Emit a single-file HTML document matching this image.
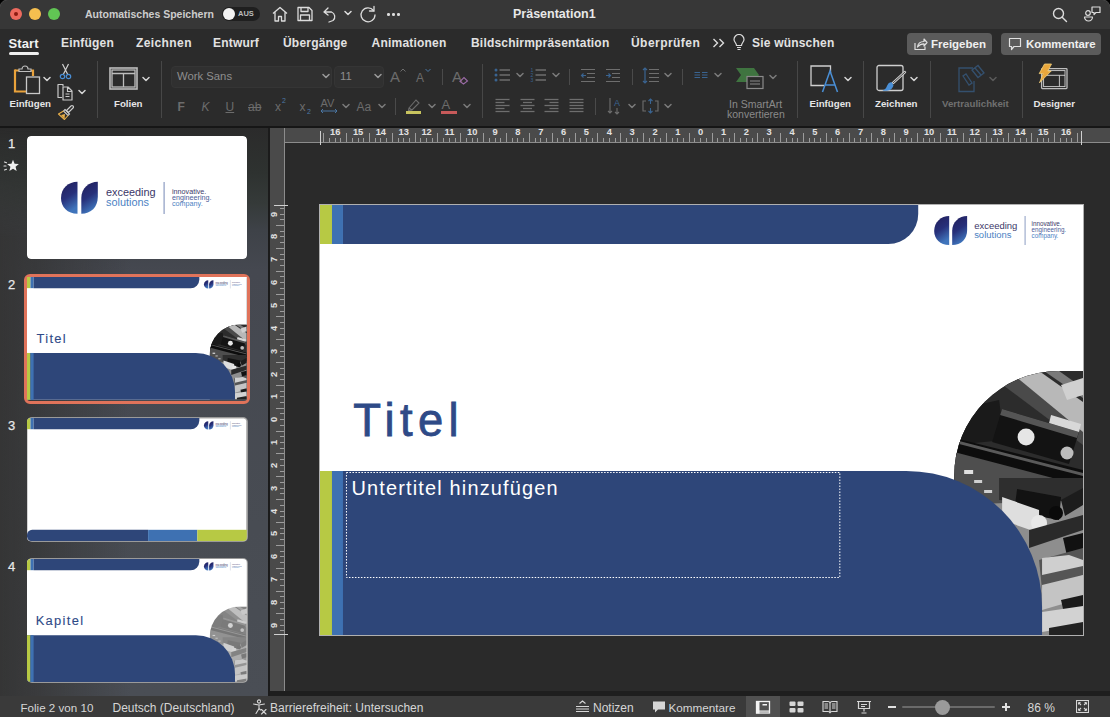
<!DOCTYPE html>
<html><head><meta charset="utf-8">
<style>
*{margin:0;padding:0;box-sizing:border-box}
html,body{width:1110px;height:717px;overflow:hidden;background:#2a2a2a;font-family:"Liberation Sans",sans-serif}
.a{position:absolute}
.t{position:absolute;white-space:nowrap;line-height:1}
#titlebar{left:0;top:0;width:1110px;height:29px;background:#373737;border-radius:8px 8px 0 0;box-shadow:0 0 0 0.5px #555}
#tabbar{left:0;top:29px;width:1110px;height:28px;background:#2b2b2b}
#ribbon{left:0;top:57px;width:1110px;height:69px;background:#2b2b2b}
.tab{font-weight:bold;font-size:12px;color:#e2e2e2;top:37px;letter-spacing:0.2px}
.lbl{font-weight:bold;font-size:9.7px;color:#e6e6e6;top:98.7px}
.sep{position:absolute;width:1.3px;background:#474747}
.chev{position:absolute;width:4.6px;height:4.6px;border-right:1.6px solid #d4d4d4;border-bottom:1.6px solid #d4d4d4;transform:translate(0.5px,0.5px) rotate(45deg)}
.chev.g{border-color:#7a7a7a}
.gray{color:#6c6c6c}
</style></head><body>
<div class="a" style="left:0;top:0;width:12px;height:12px;background:#000"></div><div class="a" style="left:1098px;top:0;width:12px;height:12px;background:#000"></div><div id="titlebar" class="a"></div>
<div id="tabbar" class="a"></div>
<div id="ribbon" class="a"></div>
<div class="a" style="left:0;top:126px;width:1110px;height:2px;background:#161616"></div>

<!-- traffic lights -->
<div class="a" style="left:10px;top:8px;width:12px;height:12px;border-radius:50%;background:#ed6a5e"></div>
<div class="a" style="left:14px;top:12px;width:4px;height:4px;border-radius:50%;background:#8c1a11"></div>
<div class="a" style="left:29px;top:8px;width:12px;height:12px;border-radius:50%;background:#f5bf4f"></div>
<div class="a" style="left:48px;top:8px;width:12px;height:12px;border-radius:50%;background:#61c554"></div>
<div class="t" style="left:85px;top:9px;font-size:10.5px;font-weight:bold;color:#cdcdcd">Automatisches Speichern</div>
<div class="a" style="left:222px;top:7px;width:38px;height:14px;border-radius:7px;background:#1f1f1f"></div>
<div class="a" style="left:223px;top:8px;width:12px;height:12px;border-radius:50%;background:#f2f2f2"></div>
<div class="t" style="left:238px;top:10px;font-size:7.5px;font-weight:bold;color:#bdbdbd">AUS</div>
<svg class="a" style="left:270px;top:5px" width="20" height="18" viewBox="0 0 20 18" fill="none" stroke="#dcdcdc" stroke-width="1.3" stroke-linejoin="round">
 <path d="M3 8.5 L10 2.5 L17 8.5 M5 7 V16 H8.5 V11.5 H11.5 V16 H15 V7"/></svg>
<svg class="a" style="left:296px;top:5px" width="18" height="18" viewBox="0 0 18 18" fill="none" stroke="#dcdcdc" stroke-width="1.3" stroke-linejoin="round">
 <path d="M2 2.5 H13 L16 5.5 V15.5 H2 Z M5 2.5 V6.5 H12 V2.5 M4.5 15.5 V10 H13.5 V15.5"/></svg>
<svg class="a" style="left:322px;top:5px" width="18" height="18" viewBox="0 0 18 18" fill="none" stroke="#dcdcdc" stroke-width="1.3" stroke-linecap="round" stroke-linejoin="round">
 <path d="M2 7 L6 3 M2 7 L6 10 M2 7 H9.5 A5 5 0 0 1 11 15.5 L7 17"/></svg>
<svg class="a" style="left:343.5px;top:9.5px" width="8" height="6" viewBox="0 0 8 6" fill="none" stroke="#dcdcdc" stroke-width="1.5" stroke-linecap="round" stroke-linejoin="round"><path d="M1 1.5 L4 4.5 L7 1.5"/></svg>
<svg class="a" style="left:358px;top:4px" width="20" height="20" viewBox="0 0 20 20" fill="none" stroke="#dcdcdc" stroke-width="1.3" stroke-linecap="round">
 <path d="M15.5 6.5 A7 7 0 1 0 17 11"/><path d="M16 2.5 V7 H11.5"/></svg>
<div class="a" style="left:387px;top:13px;width:2.5px;height:2.5px;border-radius:50%;background:#dcdcdc"></div>
<div class="a" style="left:392px;top:13px;width:2.5px;height:2.5px;border-radius:50%;background:#dcdcdc"></div>
<div class="a" style="left:397px;top:13px;width:2.5px;height:2.5px;border-radius:50%;background:#dcdcdc"></div>
<div class="t" style="left:513px;top:8px;font-size:12.5px;font-weight:bold;color:#e8e8e8">Präsentation1</div>
<svg class="a" style="left:1052px;top:7px" width="17" height="16" viewBox="0 0 17 16" fill="none" stroke="#dcdcdc" stroke-width="1.4" stroke-linecap="round">
 <circle cx="6.5" cy="6.5" r="5"/><path d="M10.2 10.2 L14.5 14.5"/></svg>
<svg class="a" style="left:1083px;top:5px" width="19" height="18" viewBox="0 0 19 18" fill="none" stroke="#dcdcdc" stroke-width="1.2" stroke-linejoin="round">
 <circle cx="5" cy="8" r="2.3"/><path d="M1.5 12 H9.5 A4 4 0 0 1 1.5 12 Z"/><path d="M9 2 H17 V7.5 H13 L11 9.5 V7.5 H9 Z"/></svg>

<div class="t tab" style="left:8.6px;top:36.5px;font-size:13px;color:#f2f2f2;letter-spacing:0.1px">Start</div>
<div class="a" style="left:9px;top:52px;width:30px;height:3px;border-radius:2px;background:#efefef"></div>
<div class="t tab" style="left:61px">Einfügen</div>
<div class="t tab" style="left:136px;letter-spacing:0.4px">Zeichnen</div>
<div class="t tab" style="left:213px">Entwurf</div>
<div class="t tab" style="left:283px">Übergänge</div>
<div class="t tab" style="left:371.6px">Animationen</div>
<div class="t tab" style="left:471px">Bildschirmpräsentation</div>
<div class="t tab" style="left:631px;letter-spacing:0.45px">Überprüfen</div>
<svg class="a" style="left:712px;top:37px" width="14" height="12" viewBox="0 0 14 12" fill="none" stroke="#dcdcdc" stroke-width="1.4"><path d="M1.5 2 L5.5 6 L1.5 10 M7.5 2 L11.5 6 L7.5 10"/></svg>
<svg class="a" style="left:732px;top:34px" width="14" height="17" viewBox="0 0 14 17" fill="none" stroke="#dcdcdc" stroke-width="1.2"><path d="M4.5 11.5 C4.5 9 2 8 2 5.5 A5 5 0 0 1 12 5.5 C12 8 9.5 9 9.5 11.5 Z M5 13.5 H9 M5.5 15.5 H8.5"/></svg>
<div class="t tab" style="left:752px">Sie wünschen</div>
<div class="a" style="left:907px;top:33px;width:85px;height:22px;border-radius:4px;background:#5b5b5b"></div>
<svg class="a" style="left:913px;top:37px" width="15" height="14" viewBox="0 0 15 14" fill="none" stroke="#e0e0e0" stroke-width="1.2" stroke-linejoin="round"><path d="M2 6 V12.5 H12 V9.5"/><path d="M4.5 10 C5 6 8 4.5 11 4.5 V2 L14 5.5 L11 9 V6.8 C8.5 6.8 6.5 7.5 4.5 10 Z"/></svg>
<div class="t" style="left:931px;top:38.5px;font-size:11.5px;font-weight:bold;color:#f0f0f0">Freigeben</div>
<div class="a" style="left:1001px;top:33px;width:100px;height:22px;border-radius:4px;background:#5b5b5b"></div>
<svg class="a" style="left:1008px;top:37px" width="14" height="14" viewBox="0 0 14 14" fill="none" stroke="#e0e0e0" stroke-width="1.2" stroke-linejoin="round"><path d="M1.5 1.5 H12.5 V9.5 H6 L3.5 12.5 V9.5 H1.5 Z"/></svg>
<div class="t" style="left:1026px;top:38.5px;font-size:11.4px;font-weight:bold;color:#f0f0f0">Kommentare</div>

<!-- ribbon group clipboard -->
<svg class="a" style="left:12px;top:64px" width="30" height="32" viewBox="0 0 30 32" fill="none">
 <path d="M3 6.5 H8 M18 6.5 H21 V12" stroke="#e9a23b" stroke-width="2.2"/>
 <path d="M3 5.5 V27.5 H14" stroke="#e9a23b" stroke-width="2.2"/>
 <path d="M7 7.5 V5 H10 A3 3 0 0 1 16 5 H19 V7.5 Z" stroke="#bdbdbd" stroke-width="1.2" fill="#2b2b2b"/>
 <rect x="14.5" y="13" width="13" height="16.5" stroke="#c8c8c8" stroke-width="1.3" fill="#2b2b2b"/>
</svg>
<svg class="a" style="left:43.0px;top:75.5px" width="8" height="6" viewBox="0 0 8 6" fill="none" stroke="#d4d4d4" stroke-width="1.5" stroke-linecap="round" stroke-linejoin="round"><path d="M1 1.5 L4 4.5 L7 1.5"/></svg>
<div class="t lbl" style="left:9.5px">Einfügen</div>
<svg class="a" style="left:59px;top:63px" width="13" height="17" viewBox="0 0 13 17" fill="none" stroke-width="1.2">
 <path d="M3.5 1 L8.5 11 M9.5 1 L4.5 11" stroke="#cfcfcf"/>
 <circle cx="3.5" cy="13.5" r="2.2" stroke="#4a8fd6"/><circle cx="9.5" cy="13.5" r="2.2" stroke="#4a8fd6"/>
</svg>
<svg class="a" style="left:56px;top:83px" width="19" height="18" viewBox="0 0 19 18" fill="none" stroke="#c8c8c8" stroke-width="1.2" stroke-linejoin="round">
 <path d="M7 3.5 V1.5 H2 V14.5 H6"/><path d="M7 4 H12 L16 8 V17 H7 Z M11.5 4.5 V8.5 H15.5 M9.5 11 H13.5 M9.5 13.5 H13.5"/>
</svg>
<svg class="a" style="left:77.5px;top:88.5px" width="8" height="6" viewBox="0 0 8 6" fill="none" stroke="#d4d4d4" stroke-width="1.5" stroke-linecap="round" stroke-linejoin="round"><path d="M1 1.5 L4 4.5 L7 1.5"/></svg>
<svg class="a" style="left:57px;top:104px" width="17" height="16" viewBox="0 0 17 16" fill="none">
 <path d="M9.5 6.5 L14 2 A1.4 1.4 0 0 1 16 4 L11.5 8.5 Z" stroke="#cfcfcf" stroke-width="1.1"/>
 <path d="M8 5.5 L12.5 10 L11 11.5 L6.5 7 Z" stroke="#cfcfcf" stroke-width="1.1"/>
 <path d="M6.5 7 L1.5 10 L7.5 15.5 L11 11.5" stroke="#eab04a" stroke-width="1.1" stroke-linejoin="round"/>
 <path d="M4 11 L8 10 L7.5 15 Z" fill="#eab04a"/>
</svg>
<div class="sep" style="left:96.5px;top:61px;height:57px"></div>
<svg class="a" style="left:109px;top:67px" width="29" height="23" viewBox="0 0 29 23" fill="none" stroke="#bdbdbd" stroke-width="1.3">
 <rect x="1" y="1" width="27" height="21" stroke-width="1.6"/><rect x="3" y="3" width="23" height="17"/>
 <path d="M3 6.5 H26 M14.5 6.5 V20"/>
</svg>
<svg class="a" style="left:141.5px;top:75.5px" width="8" height="6" viewBox="0 0 8 6" fill="none" stroke="#d4d4d4" stroke-width="1.5" stroke-linecap="round" stroke-linejoin="round"><path d="M1 1.5 L4 4.5 L7 1.5"/></svg>
<div class="t lbl" style="left:114px">Folien</div>
<div class="sep" style="left:161px;top:61px;height:57px"></div>

<!-- font group -->
<div class="a" style="left:171px;top:66px;width:161px;height:22px;border-radius:4px;background:#303030;border:1px solid #353535"></div>
<div class="t" style="left:177px;top:71px;font-size:11.3px;color:#8e8e8e">Work Sans</div>
<svg class="a" style="left:321.5px;top:72.5px" width="8" height="6" viewBox="0 0 8 6" fill="none" stroke="#9a9a9a" stroke-width="1.5" stroke-linecap="round" stroke-linejoin="round"><path d="M1 1.5 L4 4.5 L7 1.5"/></svg>
<div class="a" style="left:334px;top:66px;width:50px;height:22px;border-radius:4px;background:#303030;border:1px solid #353535"></div>
<div class="t" style="left:340px;top:71px;font-size:11.3px;color:#8e8e8e">11</div>
<svg class="a" style="left:373.5px;top:72.5px" width="8" height="6" viewBox="0 0 8 6" fill="none" stroke="#9a9a9a" stroke-width="1.5" stroke-linecap="round" stroke-linejoin="round"><path d="M1 1.5 L4 4.5 L7 1.5"/></svg>
<div class="t" style="left:390px;top:69px;font-size:15px;color:#6c6c6c">A</div>
<svg class="a" style="left:399px;top:67px" width="8" height="6" viewBox="0 0 8 6" fill="none" stroke="#6c6c6c" stroke-width="1"><path d="M1.5 4.5 L4 2 L6.5 4.5"/></svg>
<div class="t" style="left:416px;top:72px;font-size:12px;color:#6c6c6c">A</div>
<svg class="a" style="left:424px;top:67px" width="8" height="6" viewBox="0 0 8 6" fill="none" stroke="#4b77a4" stroke-width="1"><path d="M1.5 2 L4 4.5 L6.5 2"/></svg>
<div class="sep" style="left:441.5px;top:69px;height:16px;background:#4a4a4a"></div>
<div class="t" style="left:452px;top:69px;font-size:15px;color:#6c6c6c">A</div>
<svg class="a" style="left:459px;top:76px" width="10" height="9" viewBox="0 0 10 9" fill="none" stroke="#9a6aa6" stroke-width="1.1"><path d="M1 5.5 L5 1.5 L8.5 5 L4.5 8 Z"/></svg>
<!-- row 2 -->
<div class="t" style="left:177.5px;top:100.5px;font-size:12px;font-weight:bold;color:#6c6c6c">F</div>
<div class="t" style="left:201.5px;top:100.5px;font-size:12px;font-style:italic;color:#6c6c6c">K</div>
<div class="t" style="left:225.5px;top:100.5px;font-size:12px;color:#6c6c6c;text-decoration:underline">U</div>
<div class="t" style="left:248px;top:100.5px;font-size:12px;color:#6c6c6c;text-decoration:line-through">ab</div>
<div class="t" style="left:275px;top:101px;font-size:12px;color:#6c6c6c">x</div>
<div class="t" style="left:282px;top:97px;font-size:7px;color:#4b77a4">2</div>
<div class="t" style="left:299.5px;top:101px;font-size:12px;color:#6c6c6c">x</div>
<div class="t" style="left:307px;top:108px;font-size:7px;color:#4b77a4">2</div>
<div class="t" style="left:320.5px;top:98px;font-size:11px;color:#6c6c6c">AV</div>
<svg class="a" style="left:320px;top:108px" width="18" height="6" viewBox="0 0 18 6" fill="none" stroke="#4b77a4" stroke-width="1"><path d="M1 3 H17 M3 1 L1 3 L3 5 M15 1 L17 3 L15 5"/></svg>
<svg class="a" style="left:341.5px;top:102.5px" width="8" height="6" viewBox="0 0 8 6" fill="none" stroke="#7a7a7a" stroke-width="1.5" stroke-linecap="round" stroke-linejoin="round"><path d="M1 1.5 L4 4.5 L7 1.5"/></svg>
<div class="t" style="left:356.5px;top:101px;font-size:12px;color:#6c6c6c">Aa</div>
<svg class="a" style="left:377.5px;top:102.5px" width="8" height="6" viewBox="0 0 8 6" fill="none" stroke="#7a7a7a" stroke-width="1.5" stroke-linecap="round" stroke-linejoin="round"><path d="M1 1.5 L4 4.5 L7 1.5"/></svg>
<div class="sep" style="left:394.5px;top:98px;height:17px;background:#4a4a4a"></div>
<svg class="a" style="left:405px;top:97px" width="18" height="18" viewBox="0 0 18 18" fill="none">
 <path d="M4 11 L11 3 L14 6 L7 13 Z M4 11 L3.5 13.5 L7 13" stroke="#6c6c6c" stroke-width="1.1"/>
 <rect x="1" y="14" width="15" height="3" fill="#c7c35e"/></svg>
<svg class="a" style="left:427.5px;top:102.5px" width="8" height="6" viewBox="0 0 8 6" fill="none" stroke="#7a7a7a" stroke-width="1.5" stroke-linecap="round" stroke-linejoin="round"><path d="M1 1.5 L4 4.5 L7 1.5"/></svg>
<div class="t" style="left:441.5px;top:98px;font-size:13px;color:#6c6c6c">A</div>
<div class="a" style="left:441px;top:111px;width:16px;height:3px;background:#c75a5a"></div>
<svg class="a" style="left:462.5px;top:102.5px" width="8" height="6" viewBox="0 0 8 6" fill="none" stroke="#7a7a7a" stroke-width="1.5" stroke-linecap="round" stroke-linejoin="round"><path d="M1 1.5 L4 4.5 L7 1.5"/></svg>
<div class="sep" style="left:482px;top:64px;height:54px"></div>
<!-- paragraph group --><svg class="a" style="left:494px;top:68px" width="17" height="14" viewBox="0 0 17 14"><circle cx="2" cy="2" r="1.5" fill="#3a6491"/><circle cx="2" cy="7" r="1.5" fill="#3a6491"/><circle cx="2" cy="12" r="1.5" fill="#3a6491"/><path d="M5.5 2 H16 M5.5 7 H16 M5.5 12 H16" stroke="#6e6e6e" stroke-width="1.3"/></svg><svg class="a" style="left:516.0px;top:71.5px" width="8" height="6" viewBox="0 0 8 6" fill="none" stroke="#7a7a7a" stroke-width="1.5" stroke-linecap="round" stroke-linejoin="round"><path d="M1 1.5 L4 4.5 L7 1.5"/></svg><svg class="a" style="left:530px;top:67px" width="17" height="16" viewBox="0 0 17 16"><text x="0.5" y="5" font-size="5" fill="#3a6491" font-family="Liberation Sans">1</text><text x="0.5" y="10" font-size="5" fill="#3a6491" font-family="Liberation Sans">2</text><text x="0.5" y="15" font-size="5" fill="#3a6491" font-family="Liberation Sans">3</text><path d="M5.5 3 H16 M5.5 8 H16 M5.5 13 H16" stroke="#6e6e6e" stroke-width="1.3"/></svg><svg class="a" style="left:551.5px;top:71.5px" width="8" height="6" viewBox="0 0 8 6" fill="none" stroke="#7a7a7a" stroke-width="1.5" stroke-linecap="round" stroke-linejoin="round"><path d="M1 1.5 L4 4.5 L7 1.5"/></svg><div class="sep" style="left:569px;top:69px;height:16px;background:#4a4a4a"></div><svg class="a" style="left:580px;top:68px" width="16" height="15" viewBox="0 0 16 15" fill="none" stroke-width="1.2"><path d="M1 1.5 H15 M7 5.5 H15 M7 9.5 H15 M1 13.5 H15" stroke="#6e6e6e"/><path d="M6 7.5 H1.5 M3.5 5.5 L1.5 7.5 L3.5 9.5" stroke="#3a6491"/></svg><svg class="a" style="left:605px;top:68px" width="16" height="15" viewBox="0 0 16 15" fill="none" stroke-width="1.2"><path d="M1 1.5 H15 M7 5.5 H15 M7 9.5 H15 M1 13.5 H15" stroke="#6e6e6e"/><path d="M1 7.5 H5.5 M3.5 5.5 L5.5 7.5 L3.5 9.5" stroke="#3a6491"/></svg><div class="sep" style="left:631.5px;top:69px;height:16px;background:#4a4a4a"></div><svg class="a" style="left:642px;top:67px" width="18" height="17" viewBox="0 0 18 17" fill="none" stroke-width="1.2"><path d="M7 2.5 H17 M7 6.5 H17 M7 10.5 H17 M7 14.5 H17" stroke="#6e6e6e"/><path d="M3 1 V16 M1 3 L3 1 L5 3 M1 14 L3 16 L5 14" stroke="#3a6491"/></svg><svg class="a" style="left:664.0px;top:71.5px" width="8" height="6" viewBox="0 0 8 6" fill="none" stroke="#7a7a7a" stroke-width="1.5" stroke-linecap="round" stroke-linejoin="round"><path d="M1 1.5 L4 4.5 L7 1.5"/></svg><div class="sep" style="left:681.5px;top:69px;height:16px;background:#4a4a4a"></div><svg class="a" style="left:694px;top:71px" width="14" height="8" viewBox="0 0 14 8" fill="none" stroke="#3a6491" stroke-width="1.2"><path d="M0.5 1.5 H6 M0.5 4 H6 M0.5 6.5 H6 M8 1.5 H13.5 M8 4 H13.5 M8 6.5 H13.5"/></svg><svg class="a" style="left:714.0px;top:71.5px" width="8" height="6" viewBox="0 0 8 6" fill="none" stroke="#7a7a7a" stroke-width="1.5" stroke-linecap="round" stroke-linejoin="round"><path d="M1 1.5 L4 4.5 L7 1.5"/></svg><svg class="a" style="left:735px;top:67px" width="30" height="23" viewBox="0 0 30 23"><path d="M1 1 H19 L24 8 L19 15 H1 L6 8 Z" fill="#3f7440"/><rect x="12" y="9.5" width="16" height="12" fill="#2b2b2b" stroke="#8a8a8a" stroke-width="1.2"/><path d="M15 14 H25 M15 17 H25" stroke="#8a8a8a" stroke-width="1"/></svg><svg class="a" style="left:768.5px;top:73.5px" width="8" height="6" viewBox="0 0 8 6" fill="none" stroke="#7a7a7a" stroke-width="1.5" stroke-linecap="round" stroke-linejoin="round"><path d="M1 1.5 L4 4.5 L7 1.5"/></svg><div class="t" style="left:729px;top:98.5px;font-size:10.5px;color:#8a8a8a">In SmartArt</div><div class="t" style="left:727px;top:109px;font-size:10.5px;color:#8a8a8a">konvertieren</div><svg class="a" style="left:495px;top:98px" width="15" height="15" viewBox="0 0 15 15" fill="none" stroke="#6e6e6e" stroke-width="1.3"><path d="M0.5 1.5 H14.5"/><path d="M0.5 4.5 H9.5"/><path d="M0.5 7.5 H14.5"/><path d="M0.5 10.5 H9.5"/><path d="M0.5 13.5 H14.5"/></svg><svg class="a" style="left:520px;top:98px" width="15" height="15" viewBox="0 0 15 15" fill="none" stroke="#6e6e6e" stroke-width="1.3"><path d="M0.5 1.5 H14.5"/><path d="M3.0 4.5 H12.0"/><path d="M0.5 7.5 H14.5"/><path d="M3.0 10.5 H12.0"/><path d="M0.5 13.5 H14.5"/></svg><svg class="a" style="left:544px;top:98px" width="15" height="15" viewBox="0 0 15 15" fill="none" stroke="#6e6e6e" stroke-width="1.3"><path d="M0.5 1.5 H14.5"/><path d="M5.5 4.5 H14.5"/><path d="M0.5 7.5 H14.5"/><path d="M5.5 10.5 H14.5"/><path d="M0.5 13.5 H14.5"/></svg><svg class="a" style="left:569px;top:98px" width="15" height="15" viewBox="0 0 15 15" fill="none" stroke="#6e6e6e" stroke-width="1.3"><path d="M0.5 1.5 H14.5"/><path d="M0.5 4.5 H14.5"/><path d="M0.5 7.5 H14.5"/><path d="M0.5 10.5 H14.5"/><path d="M0.5 13.5 H14.5"/></svg><div class="sep" style="left:595px;top:98px;height:17px;background:#4a4a4a"></div><svg class="a" style="left:607px;top:97px" width="16" height="18" viewBox="0 0 16 18" fill="none" stroke-width="1.1"><path d="M3 1 V16 M1 14 L3 16 L5 14" stroke="#6e6e6e"/><path d="M10 11 V17 M8 15 L10 17 L12 15" stroke="#6e6e6e"/><text x="7" y="9" font-size="9" fill="#3a6491" stroke="none" font-family="Liberation Sans">A</text></svg><svg class="a" style="left:628.0px;top:102.5px" width="8" height="6" viewBox="0 0 8 6" fill="none" stroke="#7a7a7a" stroke-width="1.5" stroke-linecap="round" stroke-linejoin="round"><path d="M1 1.5 L4 4.5 L7 1.5"/></svg><svg class="a" style="left:642px;top:98px" width="17" height="16" viewBox="0 0 17 16" fill="none" stroke-width="1.1"><path d="M4 3 H1 V13 H4 M13 3 H16 V13 H13" stroke="#6e6e6e"/><path d="M8.5 1 V6 M6.5 3 L8.5 1 L10.5 3 M8.5 15 V10 M6.5 13 L8.5 15 L10.5 13" stroke="#3a6491"/></svg><svg class="a" style="left:663.5px;top:102.5px" width="8" height="6" viewBox="0 0 8 6" fill="none" stroke="#7a7a7a" stroke-width="1.5" stroke-linecap="round" stroke-linejoin="round"><path d="M1 1.5 L4 4.5 L7 1.5"/></svg><div class="sep" style="left:797px;top:61px;height:57px"></div>

<!-- insert / draw / sensitivity / designer -->
<svg class="a" style="left:809px;top:64px" width="30" height="29" viewBox="0 0 30 29" fill="none">
 <path d="M15 21.5 H2 V2 H21.5 V9" stroke="#cfcfcf" stroke-width="1.3"/>
 <path d="M13.5 28 L21 7 L28.5 28 M16 21 H26" stroke="#4a8fd6" stroke-width="1.5"/>
</svg>
<svg class="a" style="left:843.5px;top:76px" width="8" height="6" viewBox="0 0 8 6" fill="none" stroke="#d4d4d4" stroke-width="1.5" stroke-linecap="round" stroke-linejoin="round"><path d="M1 1.5 L4 4.5 L7 1.5"/></svg>
<div class="t lbl" style="left:809.5px">Einfügen</div>
<div class="sep" style="left:863px;top:61px;height:57px"></div>
<svg class="a" style="left:876px;top:64px" width="31" height="29" viewBox="0 0 31 29" fill="none">
 <rect x="1" y="1.5" width="26" height="25" rx="2" stroke="#cfcfcf" stroke-width="1.3"/>
 <path d="M29 8 L17 19" stroke="#cfcfcf" stroke-width="2.4" stroke-linecap="round"/>
 <path d="M29 8 L17 19" stroke="#292929" stroke-width="0.8" stroke-linecap="round"/>
 <path d="M16 18.5 C12 17.5 11.5 22 10 24 C9 25.5 7 26 6.5 26.5 C11 27.5 16 26.5 17.5 21.5 Z" fill="#4a8fd6"/>
</svg>
<svg class="a" style="left:909.5px;top:76px" width="8" height="6" viewBox="0 0 8 6" fill="none" stroke="#d4d4d4" stroke-width="1.5" stroke-linecap="round" stroke-linejoin="round"><path d="M1 1.5 L4 4.5 L7 1.5"/></svg>
<div class="t lbl" style="left:875px">Zeichnen</div>
<div class="sep" style="left:930px;top:61px;height:57px"></div>
<svg class="a" style="left:957px;top:63px" width="29" height="30" viewBox="0 0 29 30" fill="none" stroke="#34506e" stroke-width="1.3">
 <path d="M16 5 H2 V28.5 H17 V18"/>
 <path d="M6 13 L12 22 L15 20 L9 11 Z"/>
 <path d="M15 7 L21 2.5 L27 10 L21 14.5 Z M18 5 L24 12"/>
</svg>
<svg class="a" style="left:989.0px;top:76px" width="8" height="6" viewBox="0 0 8 6" fill="none" stroke="#5a5a5a" stroke-width="1.5" stroke-linecap="round" stroke-linejoin="round"><path d="M1 1.5 L4 4.5 L7 1.5"/></svg>
<div class="t lbl" style="left:942px;color:#707070">Vertraulichkeit</div>
<div class="sep" style="left:1022px;top:61px;height:57px"></div>
<svg class="a" style="left:1037px;top:63px" width="32" height="29" viewBox="0 0 32 29" fill="none">
 <rect x="4.6" y="5.6" width="25.4" height="20" rx="0.8" stroke="#bdbdbd" stroke-width="1.3"/>
 <rect x="6.6" y="7.6" width="21.4" height="16" stroke="#cfcfcf" stroke-width="0.9"/>
 <path d="M6.6 12.3 H28 M22.4 12.3 V23.6" stroke="#d4d4d4" stroke-width="0.9"/>
 <path d="M7.5 1 H14.5 L10.8 8 H14.2 L2.5 19.8 L6.2 10.6 H2.2 Z" fill="#e9a73c" stroke="#f3cf7a" stroke-width="0.8" stroke-linejoin="round"/>
</svg>
<div class="t lbl" style="left:1033.5px">Designer</div>

<!-- MAIN -->
<div class="a" style="left:0;top:128px;width:268px;height:568px;background:linear-gradient(180deg,#2b2b2b 0px,#2e3230 45px,#353a39 75px,#3e4248 102px,#454850 142px,#484c53 400px,#4a4e55 568px)"></div>
<div class="a" style="left:0;top:128px;width:130px;height:568px;background:linear-gradient(90deg,rgba(52,52,52,0.95) 0px,rgba(52,52,52,0.7) 40px,rgba(52,52,52,0) 130px);-webkit-mask-image:linear-gradient(180deg,transparent 0px,black 110px);mask-image:linear-gradient(180deg,transparent 0px,black 110px)"></div>
<div class="a" style="left:268px;top:128px;width:2px;height:568px;background:#1b1b1b"></div>
<div class="t" style="left:8px;top:136.8px;font-size:13px;color:#e8e8e8;-webkit-text-stroke:0.25px #e8e8e8">1</div><div class="t" style="left:8px;top:278.2px;font-size:13px;color:#e8e8e8;-webkit-text-stroke:0.25px #e8e8e8">2</div><div class="t" style="left:8px;top:419.2px;font-size:13px;color:#e8e8e8;-webkit-text-stroke:0.25px #e8e8e8">3</div><div class="t" style="left:8px;top:560.2px;font-size:13px;color:#e8e8e8;-webkit-text-stroke:0.25px #e8e8e8">4</div><svg class="a" style="left:0;top:155px" width="24" height="22" viewBox="0 155 24 22"><path d="M13.00 159.80 L14.59 163.82 L18.90 164.08 L15.57 166.83 L16.64 171.02 L13.00 168.70 L9.36 171.02 L10.43 166.83 L7.10 164.08 L11.41 163.82 Z" fill="#f0f0f0"/><path d="M4.5 162 L6.5 162.8 M4 166 H6 M4.5 170 L6.5 169.2" stroke="#e0e0e0" stroke-width="1.1" stroke-linecap="round"/></svg><svg class="a" style="left:27px;top:136px;border-radius:4px" width="220" height="123" viewBox="0 0 220 123">
<defs><linearGradient id="lg1" x1="0" y1="0" x2="0.35" y2="1"><stop offset="0" stop-color="#211d58"/><stop offset="0.55" stop-color="#27307a"/><stop offset="1" stop-color="#3f74bb"/></linearGradient></defs>
<rect width="220" height="123" rx="4" fill="#fff"/>
<path d="M50.5 45.7 V77.8 C40.5 77.8 34 71 34 62 C34 52 41.5 45.7 50.5 45.7 Z" fill="url(#lg1)"/>
<path d="M54.3 77.8 V62 C54.3 52 62 45.7 70.8 45.7 V61 C70.8 71 64 77.8 54.3 77.8 Z" fill="url(#lg1)"/>
<text x="79" y="59.6" font-size="10.9" fill="#3b3768" font-family="Liberation Sans">exceeding</text>
<text x="79" y="69.8" font-size="10.9" fill="#4c82c3" font-family="Liberation Sans">solutions</text>
<rect x="136.5" y="46" width="1.2" height="32" fill="#8c9cc2"/>
<text x="145" y="58" font-size="7.2" fill="#3b3768" font-family="Liberation Sans">innovative.</text>
<text x="145" y="64.3" font-size="7.2" fill="#4c5c98" font-family="Liberation Sans">engineering.</text>
<text x="145" y="70.3" font-size="7.2" fill="#4c82c3" font-family="Liberation Sans">company.</text>
</svg><div class="a" style="left:24px;top:273.6px;width:226.4px;height:130.2px;border:3.2px solid #e0735a;border-radius:6px"></div><svg class="a" style="left:27.4px;top:277.4px" width="219.8" height="122.8" viewBox="0 0 764 430" preserveAspectRatio="none"><rect x="0" y="0" width="764" height="430" fill="#fff"/><defs><clipPath id="pht2"><path d="M635 430 V271 A105 105 0 0 1 740 166 H764 V430 Z"/></clipPath></defs>
<g clip-path="url(#pht2)"><rect x="630" y="160" width="140" height="275" fill="#2c2c2c"/>
<g transform="translate(-320 -205)">
<rect x="950" y="365" width="140" height="275" fill="#2c2c2c"/>
<path d="M985 371 L1012 371 L1084 425 L1084 445 Z" fill="#4a4a4a"/>
<path d="M1010 371 L1040 371 L1084 402 L1084 432 Z" fill="#b8b8b8"/>
<path d="M1045 371 L1060 371 L1084 388 L1084 398 Z" fill="#7a7a7a"/>
<path d="M1062 385 L1084 378 L1084 395 L1068 400 Z" fill="#d0d0d0"/>
<path d="M955 410 L1000 400 L1005 440 L955 445 Z" fill="#1a1a1a"/>
<path d="M1003 409 L1080 432 L1070 464 L993 442 Z" fill="#131313"/>
<path d="M1003 409 L1080 432 L1078 438 L1001 415 Z" fill="#555"/>
<path d="M1052 415 L1082 424 L1080 432 L1050 423 Z" fill="#d8d8d8"/>
<circle cx="1027" cy="437" r="8.5" fill="#e6e6e6"/>
<circle cx="1068" cy="453" r="6.5" fill="#bdbdbd"/>
<path d="M955 438 L1084 470 L1084 488 L955 458 Z" fill="#0d0d0d"/>
<path d="M960 441 L1084 473 L1084 476 L960 444 Z" fill="#5a5a5a"/>
<path d="M955 452 L1084 486 L1084 500 L955 510 Z" fill="#4e4e4e"/>
<path d="M1000 478 L1084 478 L1084 505 L1000 500 Z" fill="#2e2e2e"/>
<path d="M955 505 L1084 500 L1084 635 L955 635 Z" fill="#8e8e8e"/>
<path d="M1018 489 L1062 497 L1060 520 L1015 512 Z" fill="#121212"/>
<circle cx="1057" cy="513" r="7" fill="#0a0a0a"/>
<path d="M1062 500 L1084 488 L1084 505 L1066 516 Z" fill="#1c1c1c"/>
<path d="M1003 497 L1040 510 L1040 533 L1003 520 Z" fill="#dedede"/>
<circle cx="1040" cy="523" r="8" fill="#e8e8e8"/>
<rect x="965" y="470" width="9" height="4" fill="#e0e0e0"/><rect x="975" y="480" width="8" height="3" fill="#d0d0d0"/><rect x="985" y="490" width="8" height="3" fill="#d0d0d0"/>
<path d="M1030 530 L1084 515 L1084 530 L1030 548 Z" fill="#2a2a2a"/>
<path d="M1064 538 L1084 533 L1084 550 L1068 556 Z" fill="#111"/>
<path d="M1040 560 L1084 548 L1084 575 L1043 590 Z" fill="#555"/>
<path d="M1043 558 L1070 555 L1084 560 L1084 566 L1043 575 Z" fill="#cfcfcf"/>
<path d="M1043 585 L1084 575 L1084 598 L1043 610 Z" fill="#c4c4c4"/>
<path d="M1062 600 L1084 595 L1084 612 L1066 618 Z" fill="#1a1a1a"/>
<path d="M1043 612 L1084 606 L1084 625 L1043 632 Z" fill="#d2d2d2"/>
<path d="M1050 628 L1084 622 L1084 635 L1050 635 Z" fill="#222"/>
</g></g><rect x="0" y="0" width="12" height="39" fill="#b7c944"/><rect x="12" y="0" width="11" height="39" fill="#3e71b2"/><path d="M23 0 H599 V9 A30 30 0 0 1 569 39 H23 Z" fill="#2e4679"/><defs><linearGradient id="lgt2" x1="0" y1="0" x2="0.35" y2="1"><stop offset="0" stop-color="#211d58"/><stop offset="0.55" stop-color="#27307a"/><stop offset="1" stop-color="#3f74bb"/></linearGradient></defs>
<path d="M630 11 V40 C621 40 615 34 615 26 C615 17 622 11 630 11 Z" fill="url(#lgt2)"/>
<path d="M633 40 V26 C633 17 640 11 648 11 V25 C648 34 642 40 633 40 Z" fill="url(#lgt2)"/>
<text x="655" y="24" font-size="9.5" fill="#3b3768" font-family="Liberation Sans">exceeding</text>
<text x="655" y="33" font-size="9.5" fill="#4c82c3" font-family="Liberation Sans">solutions</text>
<rect x="705.5" y="11" width="1" height="29" fill="#8c9cc2"/>
<text x="712.5" y="21.2" font-size="6.3" fill="#3b3768" font-family="Liberation Sans">innovative.</text>
<text x="712.5" y="27.1" font-size="6.3" fill="#4c5c98" font-family="Liberation Sans">engineering.</text>
<text x="712.5" y="33" font-size="6.3" fill="#4c82c3" font-family="Liberation Sans">company.</text><path d="M0 266 H587 A136 136 0 0 1 723 402 V430 H0 Z" fill="#2e4679"/><rect x="0" y="266" width="12" height="164" fill="#b7c944"/><rect x="12" y="266" width="11" height="164" fill="#3e71b2"/><text x="33" y="230" font-size="45" fill="#2e4a87" stroke="#2e4a87" stroke-width="0.35" font-family="Liberation Sans" letter-spacing="4.6">Titel</text></svg><div class="a" style="left:26.6px;top:417px;width:221.4px;height:125.2px;border-radius:5px;background:#9a9a9a"></div><div class="a" style="left:26.6px;top:557.8px;width:221.4px;height:124.8px;border-radius:5px;background:#9a9a9a"></div><svg class="a" style="left:27.4px;top:417.8px;border-radius:4px" width="219.8" height="123.6" viewBox="0 0 764 430" preserveAspectRatio="none">
<rect width="764" height="430" rx="12" fill="#fff" stroke="#9a9a9a" stroke-width="3"/>
<rect x="0" y="0" width="12" height="39" fill="#b7c944"/><rect x="12" y="0" width="11" height="39" fill="#3e71b2"/>
<path d="M23 0 H599 V9 A30 30 0 0 1 569 39 H23 Z" fill="#2e4679"/>
<defs><linearGradient id="lg3" x1="0" y1="0" x2="0.35" y2="1"><stop offset="0" stop-color="#211d58"/><stop offset="0.55" stop-color="#27307a"/><stop offset="1" stop-color="#3f74bb"/></linearGradient></defs>
<path d="M630 11 V40 C621 40 615 34 615 26 C615 17 622 11 630 11 Z" fill="url(#lg3)"/>
<path d="M633 40 V26 C633 17 640 11 648 11 V25 C648 34 642 40 633 40 Z" fill="url(#lg3)"/>
<text x="655" y="24" font-size="9.5" fill="#3b3768" font-family="Liberation Sans">exceeding</text>
<text x="655" y="33" font-size="9.5" fill="#4c82c3" font-family="Liberation Sans">solutions</text>
<rect x="705.5" y="11" width="1" height="29" fill="#8c9cc2"/>
<text x="712.5" y="21.2" font-size="6.3" fill="#3b3768" font-family="Liberation Sans">innovative.</text>
<text x="712.5" y="27.1" font-size="6.3" fill="#4c5c98" font-family="Liberation Sans">engineering.</text>
<text x="712.5" y="33" font-size="6.3" fill="#4c82c3" font-family="Liberation Sans">company.</text>
<path d="M18 389 H421 V430 H18 A18 18 0 0 1 0 412 V407 A18 18 0 0 1 18 389 Z" fill="#2e4679"/>
<rect x="421" y="389" width="171" height="41" fill="#3e71b2"/>
<rect x="592" y="389" width="172" height="41" fill="#b7c944"/>
</svg><svg class="a" style="left:27.4px;top:558.6px;border-radius:4px" width="219.8" height="123.2" viewBox="0 0 764 430" preserveAspectRatio="none"><rect x="0" y="0" width="764" height="430" fill="#fff"/><defs><clipPath id="pht4"><path d="M635 430 V271 A105 105 0 0 1 740 166 H764 V430 Z"/></clipPath></defs>
<g clip-path="url(#pht4)"><rect x="630" y="160" width="140" height="275" fill="#c4c4c4"/>
<g transform="translate(-320 -205)" opacity="0.42">
<rect x="950" y="365" width="140" height="275" fill="#2c2c2c"/>
<path d="M985 371 L1012 371 L1084 425 L1084 445 Z" fill="#4a4a4a"/>
<path d="M1010 371 L1040 371 L1084 402 L1084 432 Z" fill="#b8b8b8"/>
<path d="M1045 371 L1060 371 L1084 388 L1084 398 Z" fill="#7a7a7a"/>
<path d="M1062 385 L1084 378 L1084 395 L1068 400 Z" fill="#d0d0d0"/>
<path d="M955 410 L1000 400 L1005 440 L955 445 Z" fill="#1a1a1a"/>
<path d="M1003 409 L1080 432 L1070 464 L993 442 Z" fill="#131313"/>
<path d="M1003 409 L1080 432 L1078 438 L1001 415 Z" fill="#555"/>
<path d="M1052 415 L1082 424 L1080 432 L1050 423 Z" fill="#d8d8d8"/>
<circle cx="1027" cy="437" r="8.5" fill="#e6e6e6"/>
<circle cx="1068" cy="453" r="6.5" fill="#bdbdbd"/>
<path d="M955 438 L1084 470 L1084 488 L955 458 Z" fill="#0d0d0d"/>
<path d="M960 441 L1084 473 L1084 476 L960 444 Z" fill="#5a5a5a"/>
<path d="M955 452 L1084 486 L1084 500 L955 510 Z" fill="#4e4e4e"/>
<path d="M1000 478 L1084 478 L1084 505 L1000 500 Z" fill="#2e2e2e"/>
<path d="M955 505 L1084 500 L1084 635 L955 635 Z" fill="#8e8e8e"/>
<path d="M1018 489 L1062 497 L1060 520 L1015 512 Z" fill="#121212"/>
<circle cx="1057" cy="513" r="7" fill="#0a0a0a"/>
<path d="M1062 500 L1084 488 L1084 505 L1066 516 Z" fill="#1c1c1c"/>
<path d="M1003 497 L1040 510 L1040 533 L1003 520 Z" fill="#dedede"/>
<circle cx="1040" cy="523" r="8" fill="#e8e8e8"/>
<rect x="965" y="470" width="9" height="4" fill="#e0e0e0"/><rect x="975" y="480" width="8" height="3" fill="#d0d0d0"/><rect x="985" y="490" width="8" height="3" fill="#d0d0d0"/>
<path d="M1030 530 L1084 515 L1084 530 L1030 548 Z" fill="#2a2a2a"/>
<path d="M1064 538 L1084 533 L1084 550 L1068 556 Z" fill="#111"/>
<path d="M1040 560 L1084 548 L1084 575 L1043 590 Z" fill="#555"/>
<path d="M1043 558 L1070 555 L1084 560 L1084 566 L1043 575 Z" fill="#cfcfcf"/>
<path d="M1043 585 L1084 575 L1084 598 L1043 610 Z" fill="#c4c4c4"/>
<path d="M1062 600 L1084 595 L1084 612 L1066 618 Z" fill="#1a1a1a"/>
<path d="M1043 612 L1084 606 L1084 625 L1043 632 Z" fill="#d2d2d2"/>
<path d="M1050 628 L1084 622 L1084 635 L1050 635 Z" fill="#222"/>
</g></g><rect x="0" y="0" width="12" height="39" fill="#b7c944"/><rect x="12" y="0" width="11" height="39" fill="#3e71b2"/><path d="M23 0 H599 V9 A30 30 0 0 1 569 39 H23 Z" fill="#2e4679"/><defs><linearGradient id="lgt4" x1="0" y1="0" x2="0.35" y2="1"><stop offset="0" stop-color="#211d58"/><stop offset="0.55" stop-color="#27307a"/><stop offset="1" stop-color="#3f74bb"/></linearGradient></defs>
<path d="M630 11 V40 C621 40 615 34 615 26 C615 17 622 11 630 11 Z" fill="url(#lgt4)"/>
<path d="M633 40 V26 C633 17 640 11 648 11 V25 C648 34 642 40 633 40 Z" fill="url(#lgt4)"/>
<text x="655" y="24" font-size="9.5" fill="#3b3768" font-family="Liberation Sans">exceeding</text>
<text x="655" y="33" font-size="9.5" fill="#4c82c3" font-family="Liberation Sans">solutions</text>
<rect x="705.5" y="11" width="1" height="29" fill="#8c9cc2"/>
<text x="712.5" y="21.2" font-size="6.3" fill="#3b3768" font-family="Liberation Sans">innovative.</text>
<text x="712.5" y="27.1" font-size="6.3" fill="#4c5c98" font-family="Liberation Sans">engineering.</text>
<text x="712.5" y="33" font-size="6.3" fill="#4c82c3" font-family="Liberation Sans">company.</text><path d="M0 266 H587 A136 136 0 0 1 723 402 V430 H0 Z" fill="#2e4679"/><rect x="0" y="266" width="12" height="164" fill="#b7c944"/><rect x="12" y="266" width="11" height="164" fill="#3e71b2"/><text x="30" y="230" font-size="45" fill="#2e4a87" stroke="#2e4a87" stroke-width="0.35" font-family="Liberation Sans" letter-spacing="4.6">Kapitel</text></svg><div class="a" style="left:270px;top:128px;width:840px;height:14px;background:#4a4a4a"></div><div class="a" style="left:270px;top:142px;width:840px;height:1px;background:#8c8c8c"></div><div class="a" style="left:270px;top:128px;width:14px;height:563px;background:#4a4a4a"></div><div class="a" style="left:284px;top:128px;width:1px;height:563px;background:#8c8c8c"></div><div class="t" style="left:325.21px;top:128px;width:20px;text-align:center;font-size:9.3px;font-weight:bold;color:#e2e2e2">16</div><div class="t" style="left:348.05px;top:128px;width:20px;text-align:center;font-size:9.3px;font-weight:bold;color:#e2e2e2">15</div><div class="t" style="left:370.89px;top:128px;width:20px;text-align:center;font-size:9.3px;font-weight:bold;color:#e2e2e2">14</div><div class="t" style="left:393.73px;top:128px;width:20px;text-align:center;font-size:9.3px;font-weight:bold;color:#e2e2e2">13</div><div class="t" style="left:416.57px;top:128px;width:20px;text-align:center;font-size:9.3px;font-weight:bold;color:#e2e2e2">12</div><div class="t" style="left:439.41px;top:128px;width:20px;text-align:center;font-size:9.3px;font-weight:bold;color:#e2e2e2">11</div><div class="t" style="left:462.25px;top:128px;width:20px;text-align:center;font-size:9.3px;font-weight:bold;color:#e2e2e2">10</div><div class="t" style="left:485.09px;top:128px;width:20px;text-align:center;font-size:9.3px;font-weight:bold;color:#e2e2e2">9</div><div class="t" style="left:507.93px;top:128px;width:20px;text-align:center;font-size:9.3px;font-weight:bold;color:#e2e2e2">8</div><div class="t" style="left:530.77px;top:128px;width:20px;text-align:center;font-size:9.3px;font-weight:bold;color:#e2e2e2">7</div><div class="t" style="left:553.61px;top:128px;width:20px;text-align:center;font-size:9.3px;font-weight:bold;color:#e2e2e2">6</div><div class="t" style="left:576.45px;top:128px;width:20px;text-align:center;font-size:9.3px;font-weight:bold;color:#e2e2e2">5</div><div class="t" style="left:599.29px;top:128px;width:20px;text-align:center;font-size:9.3px;font-weight:bold;color:#e2e2e2">4</div><div class="t" style="left:622.13px;top:128px;width:20px;text-align:center;font-size:9.3px;font-weight:bold;color:#e2e2e2">3</div><div class="t" style="left:644.97px;top:128px;width:20px;text-align:center;font-size:9.3px;font-weight:bold;color:#e2e2e2">2</div><div class="t" style="left:667.81px;top:128px;width:20px;text-align:center;font-size:9.3px;font-weight:bold;color:#e2e2e2">1</div><div class="t" style="left:690.65px;top:128px;width:20px;text-align:center;font-size:9.3px;font-weight:bold;color:#e2e2e2">0</div><div class="t" style="left:713.49px;top:128px;width:20px;text-align:center;font-size:9.3px;font-weight:bold;color:#e2e2e2">1</div><div class="t" style="left:736.33px;top:128px;width:20px;text-align:center;font-size:9.3px;font-weight:bold;color:#e2e2e2">2</div><div class="t" style="left:759.17px;top:128px;width:20px;text-align:center;font-size:9.3px;font-weight:bold;color:#e2e2e2">3</div><div class="t" style="left:782.01px;top:128px;width:20px;text-align:center;font-size:9.3px;font-weight:bold;color:#e2e2e2">4</div><div class="t" style="left:804.85px;top:128px;width:20px;text-align:center;font-size:9.3px;font-weight:bold;color:#e2e2e2">5</div><div class="t" style="left:827.69px;top:128px;width:20px;text-align:center;font-size:9.3px;font-weight:bold;color:#e2e2e2">6</div><div class="t" style="left:850.53px;top:128px;width:20px;text-align:center;font-size:9.3px;font-weight:bold;color:#e2e2e2">7</div><div class="t" style="left:873.37px;top:128px;width:20px;text-align:center;font-size:9.3px;font-weight:bold;color:#e2e2e2">8</div><div class="t" style="left:896.21px;top:128px;width:20px;text-align:center;font-size:9.3px;font-weight:bold;color:#e2e2e2">9</div><div class="t" style="left:919.05px;top:128px;width:20px;text-align:center;font-size:9.3px;font-weight:bold;color:#e2e2e2">10</div><div class="t" style="left:941.89px;top:128px;width:20px;text-align:center;font-size:9.3px;font-weight:bold;color:#e2e2e2">11</div><div class="t" style="left:964.73px;top:128px;width:20px;text-align:center;font-size:9.3px;font-weight:bold;color:#e2e2e2">12</div><div class="t" style="left:987.57px;top:128px;width:20px;text-align:center;font-size:9.3px;font-weight:bold;color:#e2e2e2">13</div><div class="t" style="left:1010.41px;top:128px;width:20px;text-align:center;font-size:9.3px;font-weight:bold;color:#e2e2e2">14</div><div class="t" style="left:1033.25px;top:128px;width:20px;text-align:center;font-size:9.3px;font-weight:bold;color:#e2e2e2">15</div><div class="t" style="left:1056.09px;top:128px;width:20px;text-align:center;font-size:9.3px;font-weight:bold;color:#e2e2e2">16</div><div class="a" style="left:323.29px;top:133.3px;width:1px;height:8.7px;background:#9c9c9c"></div><div class="a" style="left:329.00px;top:138px;width:1px;height:4px;background:#9c9c9c"></div><div class="a" style="left:334.71px;top:138px;width:1px;height:4px;background:#9c9c9c"></div><div class="a" style="left:340.42px;top:138px;width:1px;height:4px;background:#9c9c9c"></div><div class="a" style="left:346.13px;top:133.3px;width:1px;height:8.7px;background:#9c9c9c"></div><div class="a" style="left:351.84px;top:138px;width:1px;height:4px;background:#9c9c9c"></div><div class="a" style="left:357.55px;top:138px;width:1px;height:4px;background:#9c9c9c"></div><div class="a" style="left:363.26px;top:138px;width:1px;height:4px;background:#9c9c9c"></div><div class="a" style="left:368.97px;top:133.3px;width:1px;height:8.7px;background:#9c9c9c"></div><div class="a" style="left:374.68px;top:138px;width:1px;height:4px;background:#9c9c9c"></div><div class="a" style="left:380.39px;top:138px;width:1px;height:4px;background:#9c9c9c"></div><div class="a" style="left:386.10px;top:138px;width:1px;height:4px;background:#9c9c9c"></div><div class="a" style="left:391.81px;top:133.3px;width:1px;height:8.7px;background:#9c9c9c"></div><div class="a" style="left:397.52px;top:138px;width:1px;height:4px;background:#9c9c9c"></div><div class="a" style="left:403.23px;top:138px;width:1px;height:4px;background:#9c9c9c"></div><div class="a" style="left:408.94px;top:138px;width:1px;height:4px;background:#9c9c9c"></div><div class="a" style="left:414.65px;top:133.3px;width:1px;height:8.7px;background:#9c9c9c"></div><div class="a" style="left:420.36px;top:138px;width:1px;height:4px;background:#9c9c9c"></div><div class="a" style="left:426.07px;top:138px;width:1px;height:4px;background:#9c9c9c"></div><div class="a" style="left:431.78px;top:138px;width:1px;height:4px;background:#9c9c9c"></div><div class="a" style="left:437.49px;top:133.3px;width:1px;height:8.7px;background:#9c9c9c"></div><div class="a" style="left:443.20px;top:138px;width:1px;height:4px;background:#9c9c9c"></div><div class="a" style="left:448.91px;top:138px;width:1px;height:4px;background:#9c9c9c"></div><div class="a" style="left:454.62px;top:138px;width:1px;height:4px;background:#9c9c9c"></div><div class="a" style="left:460.33px;top:133.3px;width:1px;height:8.7px;background:#9c9c9c"></div><div class="a" style="left:466.04px;top:138px;width:1px;height:4px;background:#9c9c9c"></div><div class="a" style="left:471.75px;top:138px;width:1px;height:4px;background:#9c9c9c"></div><div class="a" style="left:477.46px;top:138px;width:1px;height:4px;background:#9c9c9c"></div><div class="a" style="left:483.17px;top:133.3px;width:1px;height:8.7px;background:#9c9c9c"></div><div class="a" style="left:488.88px;top:138px;width:1px;height:4px;background:#9c9c9c"></div><div class="a" style="left:494.59px;top:138px;width:1px;height:4px;background:#9c9c9c"></div><div class="a" style="left:500.30px;top:138px;width:1px;height:4px;background:#9c9c9c"></div><div class="a" style="left:506.01px;top:133.3px;width:1px;height:8.7px;background:#9c9c9c"></div><div class="a" style="left:511.72px;top:138px;width:1px;height:4px;background:#9c9c9c"></div><div class="a" style="left:517.43px;top:138px;width:1px;height:4px;background:#9c9c9c"></div><div class="a" style="left:523.14px;top:138px;width:1px;height:4px;background:#9c9c9c"></div><div class="a" style="left:528.85px;top:133.3px;width:1px;height:8.7px;background:#9c9c9c"></div><div class="a" style="left:534.56px;top:138px;width:1px;height:4px;background:#9c9c9c"></div><div class="a" style="left:540.27px;top:138px;width:1px;height:4px;background:#9c9c9c"></div><div class="a" style="left:545.98px;top:138px;width:1px;height:4px;background:#9c9c9c"></div><div class="a" style="left:551.69px;top:133.3px;width:1px;height:8.7px;background:#9c9c9c"></div><div class="a" style="left:557.40px;top:138px;width:1px;height:4px;background:#9c9c9c"></div><div class="a" style="left:563.11px;top:138px;width:1px;height:4px;background:#9c9c9c"></div><div class="a" style="left:568.82px;top:138px;width:1px;height:4px;background:#9c9c9c"></div><div class="a" style="left:574.53px;top:133.3px;width:1px;height:8.7px;background:#9c9c9c"></div><div class="a" style="left:580.24px;top:138px;width:1px;height:4px;background:#9c9c9c"></div><div class="a" style="left:585.95px;top:138px;width:1px;height:4px;background:#9c9c9c"></div><div class="a" style="left:591.66px;top:138px;width:1px;height:4px;background:#9c9c9c"></div><div class="a" style="left:597.37px;top:133.3px;width:1px;height:8.7px;background:#9c9c9c"></div><div class="a" style="left:603.08px;top:138px;width:1px;height:4px;background:#9c9c9c"></div><div class="a" style="left:608.79px;top:138px;width:1px;height:4px;background:#9c9c9c"></div><div class="a" style="left:614.50px;top:138px;width:1px;height:4px;background:#9c9c9c"></div><div class="a" style="left:620.21px;top:133.3px;width:1px;height:8.7px;background:#9c9c9c"></div><div class="a" style="left:625.92px;top:138px;width:1px;height:4px;background:#9c9c9c"></div><div class="a" style="left:631.63px;top:138px;width:1px;height:4px;background:#9c9c9c"></div><div class="a" style="left:637.34px;top:138px;width:1px;height:4px;background:#9c9c9c"></div><div class="a" style="left:643.05px;top:133.3px;width:1px;height:8.7px;background:#9c9c9c"></div><div class="a" style="left:648.76px;top:138px;width:1px;height:4px;background:#9c9c9c"></div><div class="a" style="left:654.47px;top:138px;width:1px;height:4px;background:#9c9c9c"></div><div class="a" style="left:660.18px;top:138px;width:1px;height:4px;background:#9c9c9c"></div><div class="a" style="left:665.89px;top:133.3px;width:1px;height:8.7px;background:#9c9c9c"></div><div class="a" style="left:671.60px;top:138px;width:1px;height:4px;background:#9c9c9c"></div><div class="a" style="left:677.31px;top:138px;width:1px;height:4px;background:#9c9c9c"></div><div class="a" style="left:683.02px;top:138px;width:1px;height:4px;background:#9c9c9c"></div><div class="a" style="left:688.73px;top:133.3px;width:1px;height:8.7px;background:#9c9c9c"></div><div class="a" style="left:694.44px;top:138px;width:1px;height:4px;background:#9c9c9c"></div><div class="a" style="left:700.15px;top:138px;width:1px;height:4px;background:#9c9c9c"></div><div class="a" style="left:705.86px;top:138px;width:1px;height:4px;background:#9c9c9c"></div><div class="a" style="left:711.57px;top:133.3px;width:1px;height:8.7px;background:#9c9c9c"></div><div class="a" style="left:717.28px;top:138px;width:1px;height:4px;background:#9c9c9c"></div><div class="a" style="left:722.99px;top:138px;width:1px;height:4px;background:#9c9c9c"></div><div class="a" style="left:728.70px;top:138px;width:1px;height:4px;background:#9c9c9c"></div><div class="a" style="left:734.41px;top:133.3px;width:1px;height:8.7px;background:#9c9c9c"></div><div class="a" style="left:740.12px;top:138px;width:1px;height:4px;background:#9c9c9c"></div><div class="a" style="left:745.83px;top:138px;width:1px;height:4px;background:#9c9c9c"></div><div class="a" style="left:751.54px;top:138px;width:1px;height:4px;background:#9c9c9c"></div><div class="a" style="left:757.25px;top:133.3px;width:1px;height:8.7px;background:#9c9c9c"></div><div class="a" style="left:762.96px;top:138px;width:1px;height:4px;background:#9c9c9c"></div><div class="a" style="left:768.67px;top:138px;width:1px;height:4px;background:#9c9c9c"></div><div class="a" style="left:774.38px;top:138px;width:1px;height:4px;background:#9c9c9c"></div><div class="a" style="left:780.09px;top:133.3px;width:1px;height:8.7px;background:#9c9c9c"></div><div class="a" style="left:785.80px;top:138px;width:1px;height:4px;background:#9c9c9c"></div><div class="a" style="left:791.51px;top:138px;width:1px;height:4px;background:#9c9c9c"></div><div class="a" style="left:797.22px;top:138px;width:1px;height:4px;background:#9c9c9c"></div><div class="a" style="left:802.93px;top:133.3px;width:1px;height:8.7px;background:#9c9c9c"></div><div class="a" style="left:808.64px;top:138px;width:1px;height:4px;background:#9c9c9c"></div><div class="a" style="left:814.35px;top:138px;width:1px;height:4px;background:#9c9c9c"></div><div class="a" style="left:820.06px;top:138px;width:1px;height:4px;background:#9c9c9c"></div><div class="a" style="left:825.77px;top:133.3px;width:1px;height:8.7px;background:#9c9c9c"></div><div class="a" style="left:831.48px;top:138px;width:1px;height:4px;background:#9c9c9c"></div><div class="a" style="left:837.19px;top:138px;width:1px;height:4px;background:#9c9c9c"></div><div class="a" style="left:842.90px;top:138px;width:1px;height:4px;background:#9c9c9c"></div><div class="a" style="left:848.61px;top:133.3px;width:1px;height:8.7px;background:#9c9c9c"></div><div class="a" style="left:854.32px;top:138px;width:1px;height:4px;background:#9c9c9c"></div><div class="a" style="left:860.03px;top:138px;width:1px;height:4px;background:#9c9c9c"></div><div class="a" style="left:865.74px;top:138px;width:1px;height:4px;background:#9c9c9c"></div><div class="a" style="left:871.45px;top:133.3px;width:1px;height:8.7px;background:#9c9c9c"></div><div class="a" style="left:877.16px;top:138px;width:1px;height:4px;background:#9c9c9c"></div><div class="a" style="left:882.87px;top:138px;width:1px;height:4px;background:#9c9c9c"></div><div class="a" style="left:888.58px;top:138px;width:1px;height:4px;background:#9c9c9c"></div><div class="a" style="left:894.29px;top:133.3px;width:1px;height:8.7px;background:#9c9c9c"></div><div class="a" style="left:900.00px;top:138px;width:1px;height:4px;background:#9c9c9c"></div><div class="a" style="left:905.71px;top:138px;width:1px;height:4px;background:#9c9c9c"></div><div class="a" style="left:911.42px;top:138px;width:1px;height:4px;background:#9c9c9c"></div><div class="a" style="left:917.13px;top:133.3px;width:1px;height:8.7px;background:#9c9c9c"></div><div class="a" style="left:922.84px;top:138px;width:1px;height:4px;background:#9c9c9c"></div><div class="a" style="left:928.55px;top:138px;width:1px;height:4px;background:#9c9c9c"></div><div class="a" style="left:934.26px;top:138px;width:1px;height:4px;background:#9c9c9c"></div><div class="a" style="left:939.97px;top:133.3px;width:1px;height:8.7px;background:#9c9c9c"></div><div class="a" style="left:945.68px;top:138px;width:1px;height:4px;background:#9c9c9c"></div><div class="a" style="left:951.39px;top:138px;width:1px;height:4px;background:#9c9c9c"></div><div class="a" style="left:957.10px;top:138px;width:1px;height:4px;background:#9c9c9c"></div><div class="a" style="left:962.81px;top:133.3px;width:1px;height:8.7px;background:#9c9c9c"></div><div class="a" style="left:968.52px;top:138px;width:1px;height:4px;background:#9c9c9c"></div><div class="a" style="left:974.23px;top:138px;width:1px;height:4px;background:#9c9c9c"></div><div class="a" style="left:979.94px;top:138px;width:1px;height:4px;background:#9c9c9c"></div><div class="a" style="left:985.65px;top:133.3px;width:1px;height:8.7px;background:#9c9c9c"></div><div class="a" style="left:991.36px;top:138px;width:1px;height:4px;background:#9c9c9c"></div><div class="a" style="left:997.07px;top:138px;width:1px;height:4px;background:#9c9c9c"></div><div class="a" style="left:1002.78px;top:138px;width:1px;height:4px;background:#9c9c9c"></div><div class="a" style="left:1008.49px;top:133.3px;width:1px;height:8.7px;background:#9c9c9c"></div><div class="a" style="left:1014.20px;top:138px;width:1px;height:4px;background:#9c9c9c"></div><div class="a" style="left:1019.91px;top:138px;width:1px;height:4px;background:#9c9c9c"></div><div class="a" style="left:1025.62px;top:138px;width:1px;height:4px;background:#9c9c9c"></div><div class="a" style="left:1031.33px;top:133.3px;width:1px;height:8.7px;background:#9c9c9c"></div><div class="a" style="left:1037.04px;top:138px;width:1px;height:4px;background:#9c9c9c"></div><div class="a" style="left:1042.75px;top:138px;width:1px;height:4px;background:#9c9c9c"></div><div class="a" style="left:1048.46px;top:138px;width:1px;height:4px;background:#9c9c9c"></div><div class="a" style="left:1054.17px;top:133.3px;width:1px;height:8.7px;background:#9c9c9c"></div><div class="a" style="left:1059.88px;top:138px;width:1px;height:4px;background:#9c9c9c"></div><div class="a" style="left:1065.59px;top:138px;width:1px;height:4px;background:#9c9c9c"></div><div class="a" style="left:1071.30px;top:138px;width:1px;height:4px;background:#9c9c9c"></div><div class="a" style="left:1077.01px;top:133.3px;width:1px;height:8.7px;background:#9c9c9c"></div><div class="a" style="left:319.6px;top:131px;width:1.2px;height:14px;background:#d0d0d0"></div><div class="a" style="left:1081px;top:131px;width:1.2px;height:14px;background:#d0d0d0"></div><div class="t" style="left:264.40px;top:209.64px;width:20px;height:9px;text-align:center;font-size:9.3px;font-weight:bold;color:#e2e2e2;transform:rotate(-90deg)">9</div><div class="t" style="left:264.40px;top:232.48px;width:20px;height:9px;text-align:center;font-size:9.3px;font-weight:bold;color:#e2e2e2;transform:rotate(-90deg)">8</div><div class="t" style="left:264.40px;top:255.32px;width:20px;height:9px;text-align:center;font-size:9.3px;font-weight:bold;color:#e2e2e2;transform:rotate(-90deg)">7</div><div class="t" style="left:264.40px;top:278.16px;width:20px;height:9px;text-align:center;font-size:9.3px;font-weight:bold;color:#e2e2e2;transform:rotate(-90deg)">6</div><div class="t" style="left:264.40px;top:301.00px;width:20px;height:9px;text-align:center;font-size:9.3px;font-weight:bold;color:#e2e2e2;transform:rotate(-90deg)">5</div><div class="t" style="left:264.40px;top:323.84px;width:20px;height:9px;text-align:center;font-size:9.3px;font-weight:bold;color:#e2e2e2;transform:rotate(-90deg)">4</div><div class="t" style="left:264.40px;top:346.68px;width:20px;height:9px;text-align:center;font-size:9.3px;font-weight:bold;color:#e2e2e2;transform:rotate(-90deg)">3</div><div class="t" style="left:264.40px;top:369.52px;width:20px;height:9px;text-align:center;font-size:9.3px;font-weight:bold;color:#e2e2e2;transform:rotate(-90deg)">2</div><div class="t" style="left:264.40px;top:392.36px;width:20px;height:9px;text-align:center;font-size:9.3px;font-weight:bold;color:#e2e2e2;transform:rotate(-90deg)">1</div><div class="t" style="left:264.40px;top:415.20px;width:20px;height:9px;text-align:center;font-size:9.3px;font-weight:bold;color:#e2e2e2;transform:rotate(-90deg)">0</div><div class="t" style="left:264.40px;top:438.04px;width:20px;height:9px;text-align:center;font-size:9.3px;font-weight:bold;color:#e2e2e2;transform:rotate(-90deg)">1</div><div class="t" style="left:264.40px;top:460.88px;width:20px;height:9px;text-align:center;font-size:9.3px;font-weight:bold;color:#e2e2e2;transform:rotate(-90deg)">2</div><div class="t" style="left:264.40px;top:483.72px;width:20px;height:9px;text-align:center;font-size:9.3px;font-weight:bold;color:#e2e2e2;transform:rotate(-90deg)">3</div><div class="t" style="left:264.40px;top:506.56px;width:20px;height:9px;text-align:center;font-size:9.3px;font-weight:bold;color:#e2e2e2;transform:rotate(-90deg)">4</div><div class="t" style="left:264.40px;top:529.40px;width:20px;height:9px;text-align:center;font-size:9.3px;font-weight:bold;color:#e2e2e2;transform:rotate(-90deg)">5</div><div class="t" style="left:264.40px;top:552.24px;width:20px;height:9px;text-align:center;font-size:9.3px;font-weight:bold;color:#e2e2e2;transform:rotate(-90deg)">6</div><div class="t" style="left:264.40px;top:575.08px;width:20px;height:9px;text-align:center;font-size:9.3px;font-weight:bold;color:#e2e2e2;transform:rotate(-90deg)">7</div><div class="t" style="left:264.40px;top:597.92px;width:20px;height:9px;text-align:center;font-size:9.3px;font-weight:bold;color:#e2e2e2;transform:rotate(-90deg)">8</div><div class="t" style="left:264.40px;top:620.76px;width:20px;height:9px;text-align:center;font-size:9.3px;font-weight:bold;color:#e2e2e2;transform:rotate(-90deg)">9</div><div class="a" style="left:280.2px;top:207.93px;width:4px;height:1px;background:#9c9c9c"></div><div class="a" style="left:280.2px;top:213.64px;width:4px;height:1px;background:#9c9c9c"></div><div class="a" style="left:280.2px;top:219.35px;width:4px;height:1px;background:#9c9c9c"></div><div class="a" style="left:275.6px;top:225.06px;width:8.7px;height:1px;background:#9c9c9c"></div><div class="a" style="left:280.2px;top:230.77px;width:4px;height:1px;background:#9c9c9c"></div><div class="a" style="left:280.2px;top:236.48px;width:4px;height:1px;background:#9c9c9c"></div><div class="a" style="left:280.2px;top:242.19px;width:4px;height:1px;background:#9c9c9c"></div><div class="a" style="left:275.6px;top:247.90px;width:8.7px;height:1px;background:#9c9c9c"></div><div class="a" style="left:280.2px;top:253.61px;width:4px;height:1px;background:#9c9c9c"></div><div class="a" style="left:280.2px;top:259.32px;width:4px;height:1px;background:#9c9c9c"></div><div class="a" style="left:280.2px;top:265.03px;width:4px;height:1px;background:#9c9c9c"></div><div class="a" style="left:275.6px;top:270.74px;width:8.7px;height:1px;background:#9c9c9c"></div><div class="a" style="left:280.2px;top:276.45px;width:4px;height:1px;background:#9c9c9c"></div><div class="a" style="left:280.2px;top:282.16px;width:4px;height:1px;background:#9c9c9c"></div><div class="a" style="left:280.2px;top:287.87px;width:4px;height:1px;background:#9c9c9c"></div><div class="a" style="left:275.6px;top:293.58px;width:8.7px;height:1px;background:#9c9c9c"></div><div class="a" style="left:280.2px;top:299.29px;width:4px;height:1px;background:#9c9c9c"></div><div class="a" style="left:280.2px;top:305.00px;width:4px;height:1px;background:#9c9c9c"></div><div class="a" style="left:280.2px;top:310.71px;width:4px;height:1px;background:#9c9c9c"></div><div class="a" style="left:275.6px;top:316.42px;width:8.7px;height:1px;background:#9c9c9c"></div><div class="a" style="left:280.2px;top:322.13px;width:4px;height:1px;background:#9c9c9c"></div><div class="a" style="left:280.2px;top:327.84px;width:4px;height:1px;background:#9c9c9c"></div><div class="a" style="left:280.2px;top:333.55px;width:4px;height:1px;background:#9c9c9c"></div><div class="a" style="left:275.6px;top:339.26px;width:8.7px;height:1px;background:#9c9c9c"></div><div class="a" style="left:280.2px;top:344.97px;width:4px;height:1px;background:#9c9c9c"></div><div class="a" style="left:280.2px;top:350.68px;width:4px;height:1px;background:#9c9c9c"></div><div class="a" style="left:280.2px;top:356.39px;width:4px;height:1px;background:#9c9c9c"></div><div class="a" style="left:275.6px;top:362.10px;width:8.7px;height:1px;background:#9c9c9c"></div><div class="a" style="left:280.2px;top:367.81px;width:4px;height:1px;background:#9c9c9c"></div><div class="a" style="left:280.2px;top:373.52px;width:4px;height:1px;background:#9c9c9c"></div><div class="a" style="left:280.2px;top:379.23px;width:4px;height:1px;background:#9c9c9c"></div><div class="a" style="left:275.6px;top:384.94px;width:8.7px;height:1px;background:#9c9c9c"></div><div class="a" style="left:280.2px;top:390.65px;width:4px;height:1px;background:#9c9c9c"></div><div class="a" style="left:280.2px;top:396.36px;width:4px;height:1px;background:#9c9c9c"></div><div class="a" style="left:280.2px;top:402.07px;width:4px;height:1px;background:#9c9c9c"></div><div class="a" style="left:275.6px;top:407.78px;width:8.7px;height:1px;background:#9c9c9c"></div><div class="a" style="left:280.2px;top:413.49px;width:4px;height:1px;background:#9c9c9c"></div><div class="a" style="left:280.2px;top:419.20px;width:4px;height:1px;background:#9c9c9c"></div><div class="a" style="left:280.2px;top:424.91px;width:4px;height:1px;background:#9c9c9c"></div><div class="a" style="left:275.6px;top:430.62px;width:8.7px;height:1px;background:#9c9c9c"></div><div class="a" style="left:280.2px;top:436.33px;width:4px;height:1px;background:#9c9c9c"></div><div class="a" style="left:280.2px;top:442.04px;width:4px;height:1px;background:#9c9c9c"></div><div class="a" style="left:280.2px;top:447.75px;width:4px;height:1px;background:#9c9c9c"></div><div class="a" style="left:275.6px;top:453.46px;width:8.7px;height:1px;background:#9c9c9c"></div><div class="a" style="left:280.2px;top:459.17px;width:4px;height:1px;background:#9c9c9c"></div><div class="a" style="left:280.2px;top:464.88px;width:4px;height:1px;background:#9c9c9c"></div><div class="a" style="left:280.2px;top:470.59px;width:4px;height:1px;background:#9c9c9c"></div><div class="a" style="left:275.6px;top:476.30px;width:8.7px;height:1px;background:#9c9c9c"></div><div class="a" style="left:280.2px;top:482.01px;width:4px;height:1px;background:#9c9c9c"></div><div class="a" style="left:280.2px;top:487.72px;width:4px;height:1px;background:#9c9c9c"></div><div class="a" style="left:280.2px;top:493.43px;width:4px;height:1px;background:#9c9c9c"></div><div class="a" style="left:275.6px;top:499.14px;width:8.7px;height:1px;background:#9c9c9c"></div><div class="a" style="left:280.2px;top:504.85px;width:4px;height:1px;background:#9c9c9c"></div><div class="a" style="left:280.2px;top:510.56px;width:4px;height:1px;background:#9c9c9c"></div><div class="a" style="left:280.2px;top:516.27px;width:4px;height:1px;background:#9c9c9c"></div><div class="a" style="left:275.6px;top:521.98px;width:8.7px;height:1px;background:#9c9c9c"></div><div class="a" style="left:280.2px;top:527.69px;width:4px;height:1px;background:#9c9c9c"></div><div class="a" style="left:280.2px;top:533.40px;width:4px;height:1px;background:#9c9c9c"></div><div class="a" style="left:280.2px;top:539.11px;width:4px;height:1px;background:#9c9c9c"></div><div class="a" style="left:275.6px;top:544.82px;width:8.7px;height:1px;background:#9c9c9c"></div><div class="a" style="left:280.2px;top:550.53px;width:4px;height:1px;background:#9c9c9c"></div><div class="a" style="left:280.2px;top:556.24px;width:4px;height:1px;background:#9c9c9c"></div><div class="a" style="left:280.2px;top:561.95px;width:4px;height:1px;background:#9c9c9c"></div><div class="a" style="left:275.6px;top:567.66px;width:8.7px;height:1px;background:#9c9c9c"></div><div class="a" style="left:280.2px;top:573.37px;width:4px;height:1px;background:#9c9c9c"></div><div class="a" style="left:280.2px;top:579.08px;width:4px;height:1px;background:#9c9c9c"></div><div class="a" style="left:280.2px;top:584.79px;width:4px;height:1px;background:#9c9c9c"></div><div class="a" style="left:275.6px;top:590.50px;width:8.7px;height:1px;background:#9c9c9c"></div><div class="a" style="left:280.2px;top:596.21px;width:4px;height:1px;background:#9c9c9c"></div><div class="a" style="left:280.2px;top:601.92px;width:4px;height:1px;background:#9c9c9c"></div><div class="a" style="left:280.2px;top:607.63px;width:4px;height:1px;background:#9c9c9c"></div><div class="a" style="left:275.6px;top:613.34px;width:8.7px;height:1px;background:#9c9c9c"></div><div class="a" style="left:280.2px;top:619.05px;width:4px;height:1px;background:#9c9c9c"></div><div class="a" style="left:280.2px;top:624.76px;width:4px;height:1px;background:#9c9c9c"></div><div class="a" style="left:280.2px;top:630.47px;width:4px;height:1px;background:#9c9c9c"></div><div class="a" style="left:274px;top:204.5px;width:14px;height:1.2px;background:#d0d0d0"></div><div class="a" style="left:274px;top:633.5px;width:14px;height:1.2px;background:#d0d0d0"></div><div class="a" style="left:319px;top:204px;width:765px;height:432px;background:#b0b0b0"></div><svg class="a" style="left:320px;top:205px" width="763" height="430" viewBox="0 0 764 430" preserveAspectRatio="none"><rect x="0" y="0" width="764" height="430" fill="#fff"/><defs><clipPath id="phmain"><path d="M635 430 V271 A105 105 0 0 1 740 166 H764 V430 Z"/></clipPath></defs>
<g clip-path="url(#phmain)"><rect x="630" y="160" width="140" height="275" fill="#2c2c2c"/>
<g transform="translate(-320 -205)">
<rect x="950" y="365" width="140" height="275" fill="#2c2c2c"/>
<path d="M985 371 L1012 371 L1084 425 L1084 445 Z" fill="#4a4a4a"/>
<path d="M1010 371 L1040 371 L1084 402 L1084 432 Z" fill="#b8b8b8"/>
<path d="M1045 371 L1060 371 L1084 388 L1084 398 Z" fill="#7a7a7a"/>
<path d="M1062 385 L1084 378 L1084 395 L1068 400 Z" fill="#d0d0d0"/>
<path d="M955 410 L1000 400 L1005 440 L955 445 Z" fill="#1a1a1a"/>
<path d="M1003 409 L1080 432 L1070 464 L993 442 Z" fill="#131313"/>
<path d="M1003 409 L1080 432 L1078 438 L1001 415 Z" fill="#555"/>
<path d="M1052 415 L1082 424 L1080 432 L1050 423 Z" fill="#d8d8d8"/>
<circle cx="1027" cy="437" r="8.5" fill="#e6e6e6"/>
<circle cx="1068" cy="453" r="6.5" fill="#bdbdbd"/>
<path d="M955 438 L1084 470 L1084 488 L955 458 Z" fill="#0d0d0d"/>
<path d="M960 441 L1084 473 L1084 476 L960 444 Z" fill="#5a5a5a"/>
<path d="M955 452 L1084 486 L1084 500 L955 510 Z" fill="#4e4e4e"/>
<path d="M1000 478 L1084 478 L1084 505 L1000 500 Z" fill="#2e2e2e"/>
<path d="M955 505 L1084 500 L1084 635 L955 635 Z" fill="#8e8e8e"/>
<path d="M1018 489 L1062 497 L1060 520 L1015 512 Z" fill="#121212"/>
<circle cx="1057" cy="513" r="7" fill="#0a0a0a"/>
<path d="M1062 500 L1084 488 L1084 505 L1066 516 Z" fill="#1c1c1c"/>
<path d="M1003 497 L1040 510 L1040 533 L1003 520 Z" fill="#dedede"/>
<circle cx="1040" cy="523" r="8" fill="#e8e8e8"/>
<rect x="965" y="470" width="9" height="4" fill="#e0e0e0"/><rect x="975" y="480" width="8" height="3" fill="#d0d0d0"/><rect x="985" y="490" width="8" height="3" fill="#d0d0d0"/>
<path d="M1030 530 L1084 515 L1084 530 L1030 548 Z" fill="#2a2a2a"/>
<path d="M1064 538 L1084 533 L1084 550 L1068 556 Z" fill="#111"/>
<path d="M1040 560 L1084 548 L1084 575 L1043 590 Z" fill="#555"/>
<path d="M1043 558 L1070 555 L1084 560 L1084 566 L1043 575 Z" fill="#cfcfcf"/>
<path d="M1043 585 L1084 575 L1084 598 L1043 610 Z" fill="#c4c4c4"/>
<path d="M1062 600 L1084 595 L1084 612 L1066 618 Z" fill="#1a1a1a"/>
<path d="M1043 612 L1084 606 L1084 625 L1043 632 Z" fill="#d2d2d2"/>
<path d="M1050 628 L1084 622 L1084 635 L1050 635 Z" fill="#222"/>
</g></g><rect x="0" y="0" width="12" height="39" fill="#b7c944"/><rect x="12" y="0" width="11" height="39" fill="#3e71b2"/><path d="M23 0 H599 V9 A30 30 0 0 1 569 39 H23 Z" fill="#2e4679"/><defs><linearGradient id="lgmain" x1="0" y1="0" x2="0.35" y2="1"><stop offset="0" stop-color="#211d58"/><stop offset="0.55" stop-color="#27307a"/><stop offset="1" stop-color="#3f74bb"/></linearGradient></defs>
<path d="M630 11 V40 C621 40 615 34 615 26 C615 17 622 11 630 11 Z" fill="url(#lgmain)"/>
<path d="M633 40 V26 C633 17 640 11 648 11 V25 C648 34 642 40 633 40 Z" fill="url(#lgmain)"/>
<text x="655" y="24" font-size="9.5" fill="#3b3768" font-family="Liberation Sans">exceeding</text>
<text x="655" y="33" font-size="9.5" fill="#4c82c3" font-family="Liberation Sans">solutions</text>
<rect x="705.5" y="11" width="1" height="29" fill="#8c9cc2"/>
<text x="712.5" y="21.2" font-size="6.3" fill="#3b3768" font-family="Liberation Sans">innovative.</text>
<text x="712.5" y="27.1" font-size="6.3" fill="#4c5c98" font-family="Liberation Sans">engineering.</text>
<text x="712.5" y="33" font-size="6.3" fill="#4c82c3" font-family="Liberation Sans">company.</text><path d="M0 266 H587 A136 136 0 0 1 723 402 V430 H0 Z" fill="#2e4679"/><rect x="0" y="266" width="12" height="164" fill="#b7c944"/><rect x="12" y="266" width="11" height="164" fill="#3e71b2"/><text x="33.3" y="231.2" font-size="45.5" fill="#2e4a87" stroke="#2e4a87" stroke-width="0.8" font-family="Liberation Sans" letter-spacing="5.3">Titel</text><text x="31.6" y="290.3" font-size="20" fill="#ffffff" font-family="Liberation Sans" letter-spacing="1.15">Untertitel hinzufügen</text><rect x="26.5" y="267.5" width="494" height="105" fill="none" stroke="#ffffff" stroke-width="1" stroke-dasharray="1.5 1.5"/></svg><div class="a" style="left:270px;top:691px;width:840px;height:5px;background:#1e1e1e"></div><div class="a" style="left:0;top:696px;width:1110px;height:21px;background:#3a3a3a"></div><div class="t" style="left:20.5px;top:701.8px;font-size:11.6px;color:#d6d6d6">Folie 2 von 10</div><div class="t" style="left:112.5px;top:701.8px;font-size:12px;color:#d6d6d6">Deutsch (Deutschland)</div><svg class="a" style="left:252px;top:699px" width="16" height="16" viewBox="0 0 16 16" fill="none" stroke="#d6d6d6" stroke-width="1.1" stroke-linecap="round"><circle cx="7" cy="2.5" r="1.6"/><path d="M1.5 5 L7 6 L12.5 5 M7 6 V9.5 L4 14.5 M7 9.5 L8.5 11 M9.5 10.5 L14 15 M14 10.5 L9.5 15"/></svg><div class="t" style="left:270px;top:701.8px;font-size:12px;color:#d6d6d6">Barrierefreiheit: Untersuchen</div><svg class="a" style="left:575px;top:700px" width="15" height="13" viewBox="0 0 15 13" fill="none" stroke="#d6d6d6" stroke-width="1.1"><path d="M1 6.5 H14 M1 9 H14 M1 11.5 H14 M4.5 3.5 L7.5 1 L10.5 3.5"/></svg><div class="t" style="left:593px;top:701.8px;font-size:12px;color:#d6d6d6">Notizen</div><svg class="a" style="left:652px;top:700px" width="14" height="14" viewBox="0 0 14 14"><path d="M1 1.5 H13 V9.5 H6 L3 12.5 V9.5 H1 Z" fill="#d6d6d6"/></svg><div class="t" style="left:668.5px;top:701.8px;font-size:11.7px;color:#d6d6d6">Kommentare</div><div class="a" style="left:745.5px;top:696px;width:34px;height:21px;background:#505050"></div><svg class="a" style="left:755px;top:700px" width="16" height="14" viewBox="0 0 16 14"><rect x="1.5" y="1.5" width="13" height="11.5" fill="none" stroke="#f2f2f2" stroke-width="1.3"/><rect x="1" y="1" width="3.5" height="12.5" fill="#f2f2f2"/><rect x="7.5" y="4" width="4.5" height="1.5" fill="#f2f2f2"/><rect x="4" y="10.5" width="11" height="1.2" fill="#f2f2f2"/></svg><svg class="a" style="left:789px;top:701px" width="15" height="12" viewBox="0 0 15 12"><rect x="0.5" y="0.5" width="6" height="4.5" rx="1" fill="#d6d6d6"/><rect x="8.5" y="0.5" width="6" height="4.5" rx="1" fill="#d6d6d6"/><rect x="0.5" y="7" width="6" height="4.5" rx="1" fill="#d6d6d6"/><rect x="8.5" y="7" width="6" height="4.5" rx="1" fill="#d6d6d6"/></svg><svg class="a" style="left:822px;top:700px" width="16" height="14" viewBox="0 0 16 14" fill="none" stroke="#d6d6d6" stroke-width="1.1"><path d="M1 1.5 H6 A2 2 0 0 1 8 3.5 V13 A2 2 0 0 0 6 11.5 H1 Z M15 1.5 H10 A2 2 0 0 0 8 3.5 V13 A2 2 0 0 1 10 11.5 H15 Z M2.5 4 H6 M2.5 6 H6 M2.5 8 H6 M10 4 H13.5 M10 6 H13.5 M10 8 H13.5"/></svg><svg class="a" style="left:856px;top:700px" width="16" height="14" viewBox="0 0 16 14" fill="none" stroke="#d6d6d6" stroke-width="1.2"><path d="M1 1.5 H15 M2.5 1.5 V8.5 H13.5 V1.5 M8 8.5 V11.5 M5.5 13 H10.5"/><path d="M5 4.5 H11 M5 6.5 H9" stroke-width="1"/></svg><div class="a" style="left:888px;top:706px;width:8px;height:1.6px;background:#e0e0e0"></div><div class="a" style="left:902px;top:706px;width:93px;height:2px;border-radius:1px;background:#6a6a6a"></div><div class="a" style="left:935px;top:700px;width:15px;height:15px;border-radius:50%;background:#9a9a9a"></div><div class="a" style="left:1002px;top:706px;width:8px;height:1.6px;background:#e0e0e0"></div><div class="a" style="left:1005.2px;top:702.8px;width:1.6px;height:8px;background:#e0e0e0"></div><div class="t" style="left:1027.5px;top:701.8px;font-size:12px;color:#d6d6d6">86 %</div><svg class="a" style="left:1076px;top:700px" width="13" height="13" viewBox="0 0 13 13" fill="none" stroke="#d6d6d6" stroke-width="1.1"><rect x="0.5" y="0.5" width="12" height="12"/><path d="M2.5 2.5 L5 5 M2.5 2.5 H4.5 M2.5 2.5 V4.5 M10.5 2.5 L8 5 M10.5 2.5 H8.5 M10.5 2.5 V4.5 M2.5 10.5 L5 8 M2.5 10.5 H4.5 M2.5 10.5 V8.5 M10.5 10.5 L8 8 M10.5 10.5 H8.5 M10.5 10.5 V8.5"/></svg>
</body></html>
